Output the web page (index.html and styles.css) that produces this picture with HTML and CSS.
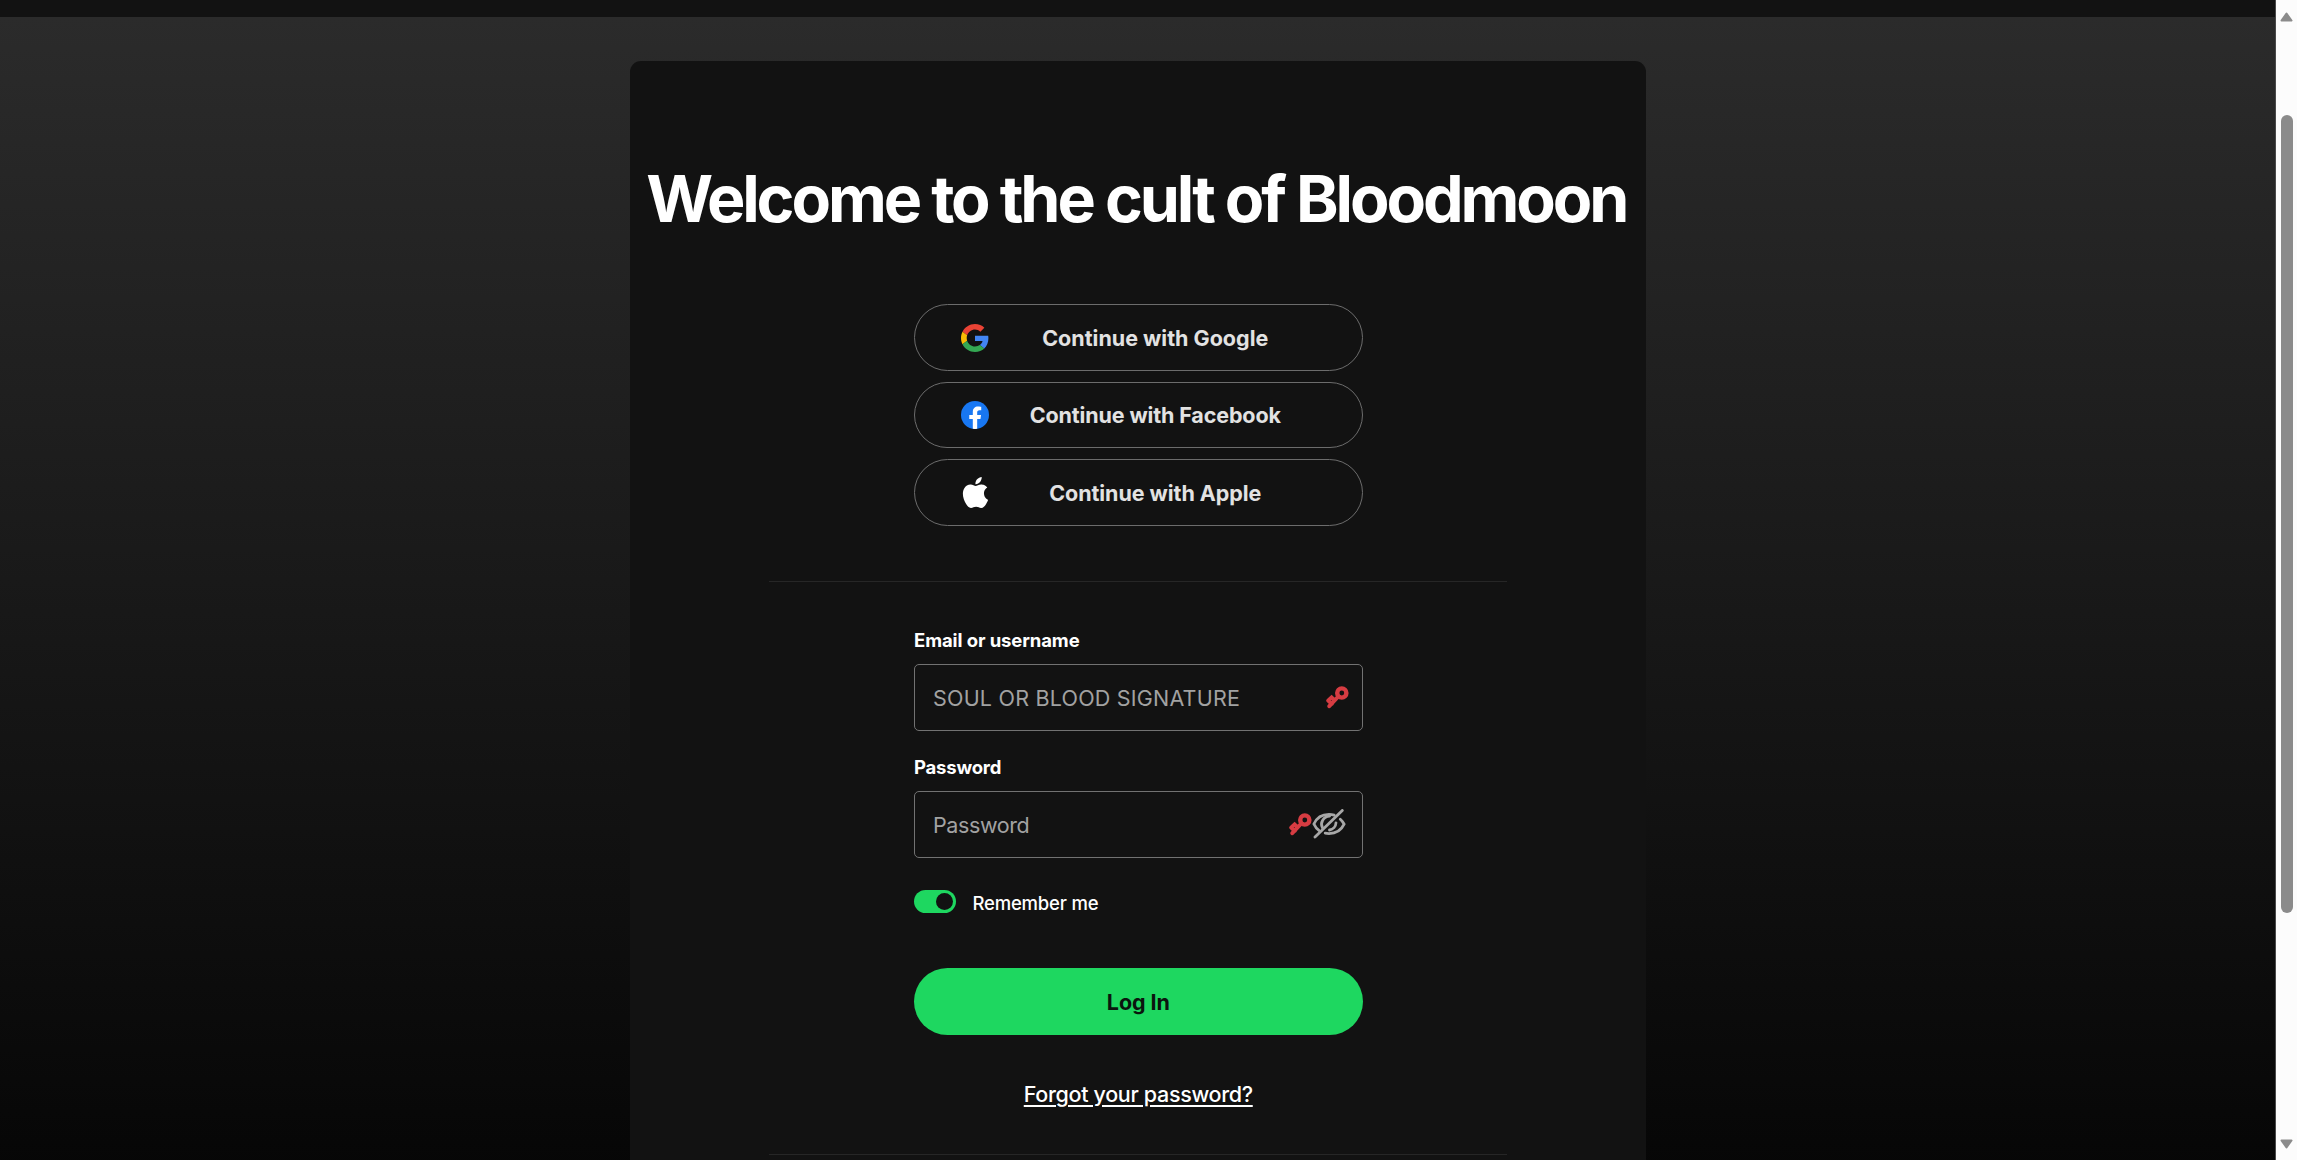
FILE: index.html
```html
<!DOCTYPE html>
<html lang="en">
<head>
<meta charset="utf-8">
<title>Log in</title>
<link rel="stylesheet" href="styles.css">
</head>
<body>
<div class="window">
  <div class="page">
    <header class="topbar"></header>
    <main class="backdrop">
      <section class="card">
        <h1 class="title">Welcome to the cult of Bloodmoon</h1>
        <div class="providers">
          <button class="provider" type="button">
            <svg class="provider-icon" viewBox="0 0 48 48"><path fill="#EA4335" d="M24 9.5c3.54 0 6.71 1.22 9.21 3.6l6.85-6.85C35.9 2.38 30.47 0 24 0 14.62 0 6.51 5.38 2.56 13.22l7.98 6.19C12.43 13.72 17.74 9.5 24 9.5z"/><path fill="#4285F4" d="M46.98 24.55c0-1.57-.15-3.09-.38-4.55H24v9.02h12.94c-.58 2.96-2.26 5.48-4.78 7.18l7.73 6c4.51-4.18 7.09-10.36 7.09-17.65z"/><path fill="#FBBC05" d="M10.53 28.59c-.48-1.45-.76-2.99-.76-4.59s.27-3.14.76-4.59l-7.98-6.19C.92 16.46 0 20.12 0 24c0 3.88.92 7.54 2.56 10.78l7.97-6.19z"/><path fill="#34A853" d="M24 48c6.48 0 11.93-2.13 15.89-5.81l-7.73-6c-2.15 1.45-4.92 2.3-8.16 2.3-6.26 0-11.57-4.22-13.47-9.91l-7.98 6.19C6.51 42.62 14.62 48 24 48z"/></svg>
            <span class="provider-label google-label">Continue with Google</span>
          </button>
          <button class="provider" type="button">
            <svg class="provider-icon" viewBox="0 0 24 24"><circle cx="12" cy="12" r="12" fill="#1877F2"/><path fill="#fff" d="M16.67 15.47 17.2 12h-3.33V9.75c0-.95.47-1.87 1.96-1.87h1.51V4.92s-1.37-.24-2.69-.24c-2.74 0-4.53 1.67-4.53 4.67V12H7.08v3.47h3.04v8.39a12 12 0 0 0 3.75 0v-8.39z"/></svg>
            <span class="provider-label facebook-label">Continue with Facebook</span>
          </button>
          <button class="provider" type="button">
            <svg class="provider-icon apple" viewBox="0 0 24 24"><path fill="#fff" d="M12.152 6.896c-.948 0-2.415-1.078-3.96-1.04-2.04.027-3.91 1.183-4.961 3.014-2.117 3.675-.546 9.103 1.519 12.09 1.013 1.454 2.208 3.09 3.792 3.039 1.52-.065 2.09-.987 3.935-.987 1.831 0 2.35.987 3.96.948 1.637-.026 2.676-1.48 3.676-2.948 1.156-1.688 1.636-3.325 1.662-3.415-.039-.013-3.182-1.221-3.22-4.857-.026-3.04 2.48-4.494 2.597-4.559-1.429-2.09-3.623-2.324-4.39-2.376-2-.156-3.675 1.09-4.61 1.09zM15.53 3.83c.843-1.012 1.4-2.427 1.245-3.83-1.207.052-2.662.805-3.532 1.818-.78.896-1.454 2.338-1.273 3.714 1.338.104 2.715-.688 3.559-1.701"/></svg>
            <span class="provider-label apple-label">Continue with Apple</span>
          </button>
        </div>
        <hr class="divider">
        <form class="form">
          <label class="label" for="user">Email or username</label>
          <div class="field">
            <input class="input signature" id="user" type="text" placeholder="SOUL OR BLOOD SIGNATURE">
            <svg class="key" viewBox="0 0 23 23"><circle cx="15.8" cy="7" r="4.6"/><path d="M12.3 10.5 3.3 20.2M2.2 14.6l3.6 3.4M2.6 14.2l3-2.8 2.9 2.8"/></svg>
          </div>
          <label class="label second" for="pass">Password</label>
          <div class="field with-eye">
            <input class="input" id="pass" type="password" placeholder="Password">
            <svg class="key" viewBox="0 0 23 23"><circle cx="15.8" cy="7" r="4.6"/><path d="M12.3 10.5 3.3 20.2M2.2 14.6l3.6 3.4M2.6 14.2l3-2.8 2.9 2.8"/></svg>
            <svg class="eye" viewBox="0 0 34 30"><path d="M3 28 30.3 1.4"/><path d="M7.2 21.6C4.6 19.8 3 17.5 1.9 15 4.7 8.8 10.6 5.4 17 5.4c1.9 0 3.6.3 5.2.8"/><path d="M10.4 18.6C7.9 13.6 11.3 7.6 17.6 7.2"/><path d="M28.3 10.2c1.6 1.4 2.9 3.1 3.8 5-2.8 6-8.7 9.4-15.1 9.4-1.3 0-2.6-.1-3.8-.4"/><path d="M24 13.8c-.2 3.8-3 6.6-6.5 7.2"/></svg>
          </div>
          <div class="remember">
            <span class="toggle"><span class="knob"></span></span>
            <span class="remember-text">Remember me</span>
          </div>
          <button class="login" type="button">Log In</button>
        </form>
        <a class="forgot" href="#">Forgot your password?</a>
        <hr class="divider last">
      </section>
    </main>
  </div>
  <div class="scrollbar">
    <svg class="arrow" viewBox="0 0 13 10"><path d="M6.5 1.5 11.5 8.5H1.5Z"/></svg>
    <div class="thumb"></div>
    <svg class="arrow down" viewBox="0 0 13 10"><path d="M6.5 8.5 11.5 1.5H1.5Z"/></svg>
  </div>
</div>
</body>
</html>
```
FILE: styles.css
```css
* { box-sizing: border-box; }

body {
  margin: 0;
  overflow: hidden;
  background: #000;
  color: #fff;
  font-family: Inter, "Liberation Sans", sans-serif;
}

.window {
  display: flex;
  height: 1160px;
  overflow: hidden;
}

.page {
  flex: 1;
  min-width: 0;
  border-right: 1px solid #4a4a4a;
}

.topbar {
  height: 16.5px;
  background: #121212;
}

.backdrop {
  display: flex;
  justify-content: center;
  align-items: flex-start;
  height: 1344px;
  padding: 44.5px 0 0 1.5px;
  background: linear-gradient(#2b2b2b, #000);
}

.card {
  display: flex;
  flex-direction: column;
  align-items: center;
  width: 1016px;
  height: 1260px;
  padding-top: 97.5px;
  border-radius: 11px;
  background: #121212;
}

.title {
  margin: 0 0 65.5px;
  padding-right: 4px;
  font-size: 64.5px;
  font-weight: 700;
  line-height: 80px;
  letter-spacing: -3.1px;
  white-space: nowrap;
}

.providers {
  display: flex;
  flex-direction: column;
  gap: 11px;
  width: 448.5px;
}

.provider {
  display: flex;
  align-items: center;
  height: 66.5px;
  padding: 1px 40px 0 46px;
  border: 1px solid #6c6c6c;
  border-radius: 34px;
  background: transparent;
  color: #e2e2e2;
  font: 700 21.5px Inter, sans-serif;
}

.provider-icon {
  flex: none;
  width: 28px;
  height: 28px;
}

.provider-icon.apple {
  width: 31px;
  height: 31px;
  margin: 0 -1.5px;
}

.provider-label {
  flex: 1;
  text-align: center;
  white-space: nowrap;
}

.facebook-label { letter-spacing: -0.13px; }
.apple-label { letter-spacing: -0.05px; }

.divider {
  width: 738px;
  height: 1px;
  margin: 55px 0 46px;
  border: 0;
  background: #262626;
}

.form {
  display: flex;
  flex-direction: column;
  width: 448.5px;
}

.label {
  margin-bottom: 12.5px;
  font-size: 18.5px;
  font-weight: 700;
  line-height: 24px;
  letter-spacing: -0.1px;
}

.label.second {
  margin-top: 24px;
  letter-spacing: -0.2px;
}

.field {
  display: flex;
  align-items: center;
  height: 66.5px;
  padding: 0 13px 0 18px;
  border: 1px solid #727272;
  border-radius: 5px;
}

.field.with-eye { padding-right: 15.5px; }

.input {
  flex: 1;
  min-width: 0;
  padding: 1px 0 0;
  border: 0;
  outline: 0;
  background: transparent;
  color: #fff;
  font: 400 21.5px Inter, sans-serif;
  letter-spacing: -0.4px;
}

.input.signature { letter-spacing: 0.21px; }

.input::placeholder {
  color: #a2a2a2;
  opacity: 1;
}

.key {
  flex: none;
  width: 23px;
  height: 23px;
  fill: none;
  stroke: #d63c42;
  stroke-width: 4.4;
  stroke-linecap: round;
}

.key path { stroke-width: 3.9; }

.eye {
  flex: none;
  width: 34px;
  height: 30px;
  margin-bottom: 1px;
  fill: none;
  stroke: #a7a7a7;
  stroke-width: 2.8;
  stroke-linecap: round;
}

.remember {
  display: flex;
  align-items: center;
  gap: 17px;
  height: 24px;
  margin: 32px 0 54.5px;
}

.toggle {
  display: flex;
  align-items: center;
  justify-content: flex-end;
  width: 41.5px;
  height: 23px;
  padding-right: 2.7px;
  border-radius: 12px;
  background: #1ed760;
}

.knob {
  width: 17px;
  height: 17px;
  border-radius: 50%;
  background: #121212;
}

.remember-text {
  padding-top: 2px;
  font-size: 18.5px;
  font-weight: 500;
  line-height: 24px;
  letter-spacing: -0.2px;
}

.login {
  height: 66.5px;
  padding: 1px 0 0;
  border: 0;
  border-radius: 34px;
  background: #1ed760;
  color: #0b150e;
  font: 700 21.5px Inter, sans-serif;
  letter-spacing: -0.1px;
}

.forgot {
  margin-top: 45.5px;
  color: #fff;
  font-size: 21.5px;
  font-weight: 500;
  line-height: 28px;
  letter-spacing: -0.33px;
  text-decoration: underline;
  text-decoration-thickness: 2px;
  text-underline-offset: 3px;
}

.divider.last { margin: 45.5px 0 0; }

.scrollbar {
  display: flex;
  flex-direction: column;
  align-items: center;
  width: 21px;
  padding: 11.5px 0 11px 0;
  background: #fcfcfc;
}

.arrow {
  width: 13px;
  height: 10px;
  fill: #8b8b8b;
  stroke: #8b8b8b;
  stroke-width: 2;
  stroke-linejoin: round;
}

.thumb {
  width: 12px;
  height: 798px;
  margin-top: 93.5px;
  border-radius: 6px;
  background: #8b8b8b;
}

.arrow.down { margin-top: auto; }
```
